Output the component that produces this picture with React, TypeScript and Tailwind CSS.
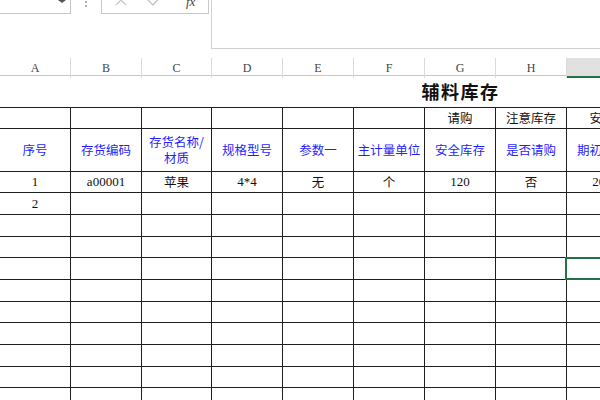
import React from 'react';

const letters = ['A', 'B', 'C', 'D', 'E', 'F', 'G', 'H', 'I'];
const grid = 'grid grid-cols-[71px_71px_70px_71px_71px_71px_71px_71px_71px]';
const cjk = "font-['Noto_Sans_CJK_SC','Noto_Sans',sans-serif]";
const serif = "font-['Liberation_Serif','Noto_Sans_CJK_SC',serif]";

const row3 = ['', '', '', '', '', '', '请购', '注意库存', '安全'];
const heads = ['序号', '存货编码', '存货名称/\n材质', '规格型号', '参数一', '主计量单位', '安全库存', '是否请购', '期初库存'];
const data = ['1', 'a00001', '苹果', '4*4', '无', '个', '120', '否', '200'];
const emptyHeights = [22, 22, 21, 22, 22, 21, 22, 22, 21, 22];

function Cell({ h, children, className = '' }: { h: string; children?: React.ReactNode; className?: string }) {
    return (
        <div className={`${h} border-r border-b border-[#1f1f1f] flex items-center justify-center whitespace-pre text-center relative ${className}`}>
            {children}
        </div>
    );
}

export default function App() {
    return (
        <div className="w-[600px] h-[400px] overflow-hidden bg-white relative">
            {/* formula bar */}
            <div className="flex h-[48px]">
                <div className="w-[71px] h-[14px] border-r border-b border-[#c8c8c8] relative">
                    <div className="absolute left-[58px] top-0 w-0 h-0 border-l-[4px] border-r-[4px] border-t-[3px] border-l-transparent border-r-transparent border-t-[#555]" />
                </div>
                <div className="w-[30px] flex flex-col items-center gap-[2px] pt-[1px]">
                    <div className="w-[2px] h-[2px] bg-[#b0b0b0]" />
                    <div className="w-[2px] h-[2px] bg-[#b0b0b0]" />
                </div>
                <div className="w-[108px] h-[14px] border-l border-r border-b border-[#c8c8c8] flex items-start overflow-hidden">
                    <svg width="14" height="14" viewBox="0 0 14 14" className="ml-[12px] -mt-[7px]">
                        <path d="M2 2 L12 12 M12 2 L2 12" stroke="#c4c4c4" strokeWidth="1.2" fill="none" />
                    </svg>
                    <svg width="16" height="14" viewBox="0 0 16 14" className="ml-[19px] -mt-[7px]">
                        <path d="M1 7 L6 12 L15 2" stroke="#c4c4c4" strokeWidth="1.4" fill="none" />
                    </svg>
                    <span className="ml-[23px] -mt-[5px] italic text-[13px] leading-[14px] text-[#444] font-['Liberation_Serif',serif]">fx</span>
                </div>
                <div className="ml-[2px] flex-1 h-[49px] border-l border-b border-[#d0d0d0]" />
            </div>

            {/* column headers */}
            <div className={`${grid} mt-[10px] h-[18px] border-b border-[#c6c6c6]`}>
                {letters.map((l) => (
                    <div
                        key={l}
                        className={`border-r border-[#dadada] flex items-center justify-center text-[12px] text-[#444] ${serif} ${l === 'I' ? 'bg-[#e1e1e1] border-b-2 border-b-[#217346]' : ''}`}
                    >
                        {l}
                    </div>
                ))}
            </div>

            {/* title row */}
            <div className={`${grid} h-[31px]`}>
                {letters.map((l) => (
                    <div key={l} className="flex items-center justify-center overflow-visible whitespace-nowrap">
                        {l === 'G' && (
                            <span className={`${cjk} font-bold text-[18px] tracking-[1.5px] text-[#111]`}>辅料库存</span>
                        )}
                    </div>
                ))}
            </div>

            {/* sheet */}
            <div className={`border-t border-[#1f1f1f] ${cjk} text-[12.5px]`}>
                <div className={grid}>
                    {row3.map((t, i) => (
                        <Cell key={i} h="h-[21px]" className="text-[#111]">{t}</Cell>
                    ))}
                </div>
                <div className={grid}>
                    {heads.map((t, i) => (
                        <Cell key={i} h="h-[43px]" className="text-[#1f1fff] leading-[16px]">{t}</Cell>
                    ))}
                </div>
                <div className={grid}>
                    {data.map((t, i) => (
                        <Cell
                            key={i}
                            h="h-[21px]"
                            className={`text-[#111] ${/^[\x00-\x7f]+$/.test(t) ? `${serif} text-[13px]` : ''}`}
                        >
                            {t}
                        </Cell>
                    ))}
                </div>
                {emptyHeights.map((h, r) => (
                    <div key={r} className={grid}>
                        {letters.map((l, i) => (
                            <Cell
                                key={l}
                                h={h === 22 ? 'h-[22px]' : 'h-[21px]'}
                                className={`text-[#111] ${serif} text-[13px]`}
                            >
                                {r === 0 && i === 0 ? '2' : ''}
                                {r === 3 && l === 'I' && (
                                    <div className="absolute -left-[2px] -top-[1px] w-[80px] h-[23px] border-2 border-[#217346]" />
                                )}
                            </Cell>
                        ))}
                    </div>
                ))}
            </div>
        </div>
    );
}
